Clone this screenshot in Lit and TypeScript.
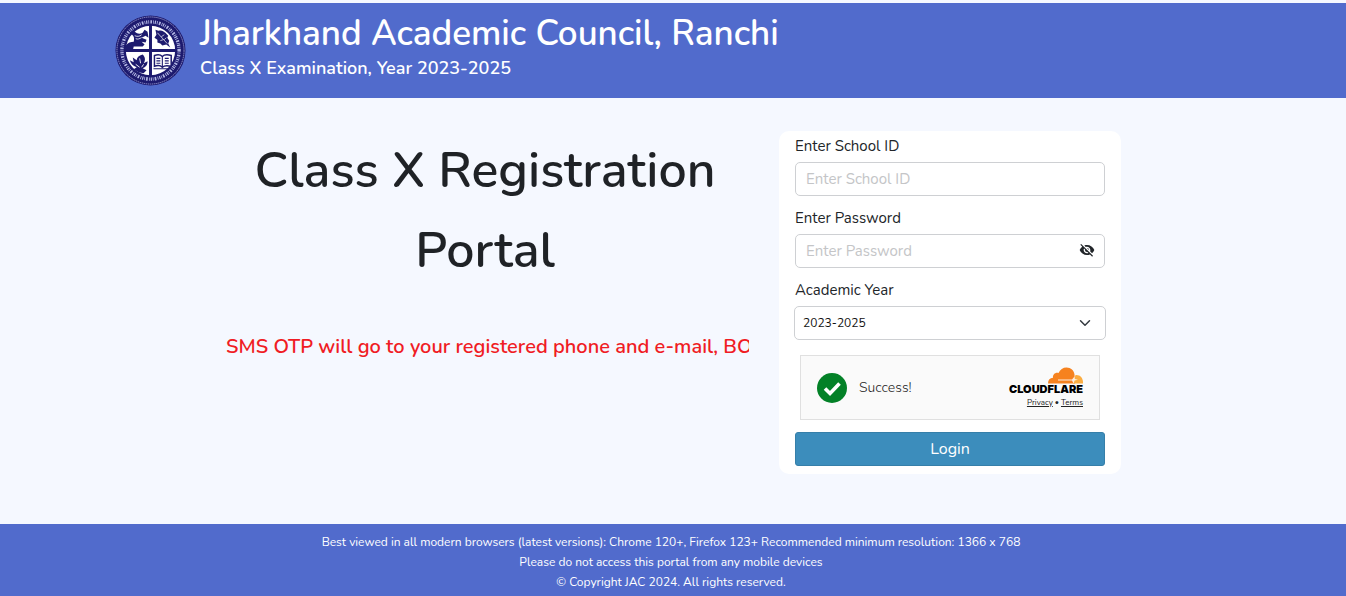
import { LitElement, html, css, svg } from "lit";
import { customElement, state } from "lit/decorators.js";

const councilSeal = svg`
  <circle cx="36" cy="36" r="35.5" fill="#1d1a6e"/>
  <circle cx="36" cy="36" r="34" fill="none" stroke="#a9aede" stroke-width="0.8" stroke-dasharray="1.4 0.7"/>
  <circle cx="36" cy="36" r="29" fill="none" stroke="#b4b8e4" stroke-width="3.400" stroke-dasharray="1.2 1 0.8 1.3 1.7 1.2 0.7 0.9"/>
  <circle cx="36" cy="36" r="25" fill="#fff"/>
  <path d="M36 10V62M10 36H62" stroke="#1d1a6e" stroke-width="3"/>
  <path d="M11 31c2-3 5-4 8-4 1-4 0-6-3-8l3-3c3 3 6 4 9 2l2-3 3 2 1 6-3-2-4 2 5 2-1 3-4-1 3 3-2 2h-9l-1 4H11z" fill="#1d1a6e"/>
  <path d="M20 21c2 1 5 1 7-1M21 24c2 1 4 0 6-1" fill="none" stroke="#fff" stroke-width="0.8"/>
  <path d="M41 15l3 1c3-1 5 0 7 2l3 3-1 2 2 3-1 3 2 4-4-3-4 1-2-2-3-1v-3l-3-2 2-3z" fill="#1d1a6e"/>
  <path d="M43 18l10 11M47 22l3-2M46 26l3-1M50 25l2-2" fill="none" stroke="#fff" stroke-width="0.7"/>
  <path d="M28 40c3 3 3 6 1 9l4-2c0 4-2 6-5 7l4 2-3 3-5-1-5-3 3-2c-4-1-6-4-7-7l4 2-1-5 4 3c0-3 2-5 6-6z" fill="#1d1a6e"/>
  <path d="M25 44l1 5M21 50l4 3M29 50l-2 3" stroke="#fff" stroke-width="0.9"/>
  <path d="M40 41c3-1 6-1 8 1 2-2 5-2 9-1v11c-4-1-7-1-9 1-2-2-5-2-8-1z" fill="#fff" stroke="#1d1a6e" stroke-width="1.5"/>
  <path d="M48 42v11M42 44h4M42 46.500h4M42 49h4M50.500 44h4M50.500 46.500h4M50.500 49h4M39 54.500h18" stroke="#1d1a6e" stroke-width="1.100"/>`;

@customElement("app-root")
export class AppRoot extends LitElement {
  @state() private passwordShown = false;

  static styles = css`
    :host {
      display: flex;
      flex-direction: column;
      min-height: 100vh;
      box-sizing: border-box;
      border-top: 3px solid #f5f8ff;
      background: #f5f8ff;
      color: #212529;
      font-family: Nunito, Roboto, sans-serif;
    }
    * { box-sizing: border-box; }
    .masthead { background: #516bcc; color: #fff; padding: 12px 4px 12px 0; }
    .masthead-row {
      display: flex;
      gap: 14px;
      width: 100%;
      max-width: 1112px;
      margin: 0 auto;
    }
    .seal { width: 71px; height: 71px; flex: none; }
    .title { margin: 0; font-size: 35px; line-height: 38px; font-weight: 600; }
    .subtitle { margin: 5px 0 0; font-size: 18px; line-height: 20px; font-weight: 600; }
    .main { flex: 1; padding: 33px 4px 48px 0; }
    .columns {
      display: grid;
      grid-template-columns: minmax(0, 528fr) minmax(0, 342fr);
      gap: 30px;
      align-items: start;
      width: 100%;
      max-width: 900px;
      margin: 0 auto;
    }
    .portal { margin: 0; font-size: 50px; line-height: 80px; font-weight: 600; text-align: center; color: #1f2226; }
    .notice {
      margin: 41px 0 0;
      padding-left: 5px;
      overflow: hidden;
      white-space: nowrap;
      font-size: 20px;
      line-height: 30px;
      font-weight: 600;
      color: #f01c24;
    }
    .card { background: #fff; border-radius: 10px; padding: 4px 16px 8px; display: flex; flex-direction: column; }
    .label { font-size: 15px; line-height: 22px; margin-bottom: 5px; }
    .field {
      width: 100%;
      height: 34px;
      margin-bottom: 11px;
      padding: 0 10px;
      border: 1px solid #ced0d3;
      border-radius: 5px;
      background: #fff;
      font: inherit;
      font-size: 15px;
      color: #212529;
    }
    .field::placeholder { color: #c4c5c7; opacity: 1; }
    .password { display: grid; align-items: start; }
    .password .field { grid-area: 1 / 1; padding-right: 36px; }
    .reveal {
      grid-area: 1 / 1;
      justify-self: end;
      display: flex;
      align-items: center;
      height: 32px;
      padding: 0;
      margin-right: 10px;
      border: 0;
      background: none;
      cursor: pointer;
    }
    .select {
      padding: 0 32px 0 8px;
      margin-bottom: 0;
      appearance: none;
      font-size: 12px;
      color: #111;
      grid-area: 1 / 1;
    }
    .select-wrap { display: grid; align-items: center; margin: 0 -1px 15px; }
    .chevron { grid-area: 1 / 1; justify-self: end; margin-right: 15px; pointer-events: none; }
    .turnstile {
      display: flex;
      align-items: center;
      align-self: center;
      width: 100%;
      max-width: 300px;
      height: 65px;
      margin-bottom: 12px;
      padding: 0 16px;
      border: 1px solid #e0e0e0;
      background: #fafafa;
    }
    .success { flex: 1; margin-left: 12px; font-size: 14px; font-weight: 300; color: #232323; }
    .brand { display: flex; flex-direction: column; align-items: flex-end; }
    .links { display: flex; gap: 2px; font-size: 8px; line-height: 12px; margin-top: 3px; }
    .link { color: #232323; }
    .wordmark { font-family: Inter, sans-serif; font-size: 11px; line-height: 10px; font-weight: 900; color: #000; }
    .login {
      height: 34px;
      border: 1px solid #367fa9;
      border-radius: 3px;
      background: #3c8dbc;
      color: #fff;
      font: inherit;
      font-size: 16px;
      cursor: pointer;
    }
    .footer {
      background: #516bcc;
      color: #fff;
      padding: 8px 4px 4px 0;
      text-align: center;
      font-size: 12px;
      line-height: 20px;
    }
    .footer-line { margin: 0; }
    @media (max-width: 760px) {
      .columns { grid-template-columns: minmax(0, 1fr); padding: 0 16px; }
      .masthead-row { padding: 0 16px; }
    }
  `;

  private toggle() {
    this.passwordShown = !this.passwordShown;
  }

  render() {
    return html`
      <header class="masthead">
        <div class="masthead-row">
          <svg class="seal" viewBox="0 0 72 72" aria-hidden="true">${councilSeal}</svg>
          <div>
            <h1 class="title">Jharkhand Academic Council, Ranchi</h1>
            <p class="subtitle">Class X Examination, Year 2023-2025</p>
          </div>
        </div>
      </header>
      <main class="main">
        <div class="columns">
          <section>
            <h2 class="portal">Class X Registration Portal</h2>
            <p class="notice">SMS OTP will go to your registered phone and e-mail, BO</p>
          </section>
          <form class="card" @submit=${(e: Event) => e.preventDefault()}>
            <label class="label" for="school">Enter School ID</label>
            <input class="field" id="school" type="text" placeholder="Enter School ID" />
            <label class="label" for="password">Enter Password</label>
            <div class="password">
              <input class="field" id="password" type=${this.passwordShown ? "text" : "password"} placeholder="Enter Password" />
              <button class="reveal" type="button" aria-label="Show password" @click=${this.toggle}>
                <svg width="16" height="16" viewBox="0 0 24 24" fill="#212529" aria-hidden="true">
                  <path d="M12 7c2.760 0 5 2.240 5 5 0 .65-.13 1.260-.36 1.830l2.920 2.920c1.510-1.260 2.700-2.890 3.430-4.750-1.730-4.390-6-7.500-11-7.500-1.400 0-2.740.25-3.980.7l2.160 2.160C10.740 7.130 11.350 7 12 7zM2 4.270l2.280 2.280.46.46C3.080 8.300 1.780 10.020 1 12c1.730 4.390 6 7.500 11 7.500 1.550 0 3.030-.3 4.380-.84l.42.42L19.730 22 21 20.730 3.270 3 2 4.270zM7.530 9.800l1.550 1.550c-.05.21-.08.43-.08.65 0 1.660 1.340 3 3 3 .22 0 .44-.03.65-.08l1.550 1.550c-.67.33-1.410.53-2.200.53-2.760 0-5-2.240-5-5 0-.79.2-1.530.53-2.200zm4.310-.78l3.150 3.150.02-.16c0-1.660-1.340-3-3-3l-.17.01z"/>
                </svg>
              </button>
            </div>
            <label class="label" for="year">Academic Year</label>
            <div class="select-wrap">
              <select class="field select" id="year"><option>2023-2025</option></select>
              <svg class="chevron" width="12" height="12" viewBox="0 0 16 16" fill="none" stroke="#343a40" stroke-width="2" stroke-linecap="round" stroke-linejoin="round" aria-hidden="true"><path d="M2 5l6 6 6-6"/></svg>
            </div>
            <div class="turnstile">
              <svg width="30" height="30" viewBox="0 0 30 30" aria-hidden="true"><circle cx="15" cy="15" r="15" fill="#038127"/><path d="M8 15.500l5 5L22.500 10.500" fill="none" stroke="#fff" stroke-width="3.600"/></svg>
              <span class="success">Success!</span>
              <div class="brand">
                <svg width="36" height="17" viewBox="0 0 36 17" aria-hidden="true">
                  <path d="M1 16.500C1 13 3 11 6 10.800C5.500 7.500 8.500 5 11.500 6C13 2.500 16 .5 19.500 .5C24 .5 27 3.500 27.500 7.500L28 16.500z" fill="#f6821f"/>
                  <path d="M26 16.500L28.500 8C33 7.500 35.500 10.500 36 14.500V16.500z" fill="#fbad41"/>
                  <path d="M11 12.600H25L27.500 9.500L27.800 12L31 12.800L27.600 13.600L26.500 16.500L25 13.500H11z" fill="#fff" fill-opacity=".85"/>
                </svg>
                <span class="wordmark">CLOUDFLARE</span>
                <div class="links"><a class="link" href="#privacy">Privacy</a><span>•</span><a class="link" href="#terms">Terms</a></div>
              </div>
            </div>
            <button class="login" type="submit">Login</button>
          </form>
        </div>
      </main>
      <footer class="footer">
        <p class="footer-line">Best viewed in all modern browsers (latest versions): Chrome 120+, Firefox 123+ Recommended minimum resolution: 1366 x 768</p>
        <p class="footer-line">Please do not access this portal from any mobile devices</p>
        <p class="footer-line">© Copyright JAC 2024. All rights reserved.</p>
      </footer>
    `;
  }
}
